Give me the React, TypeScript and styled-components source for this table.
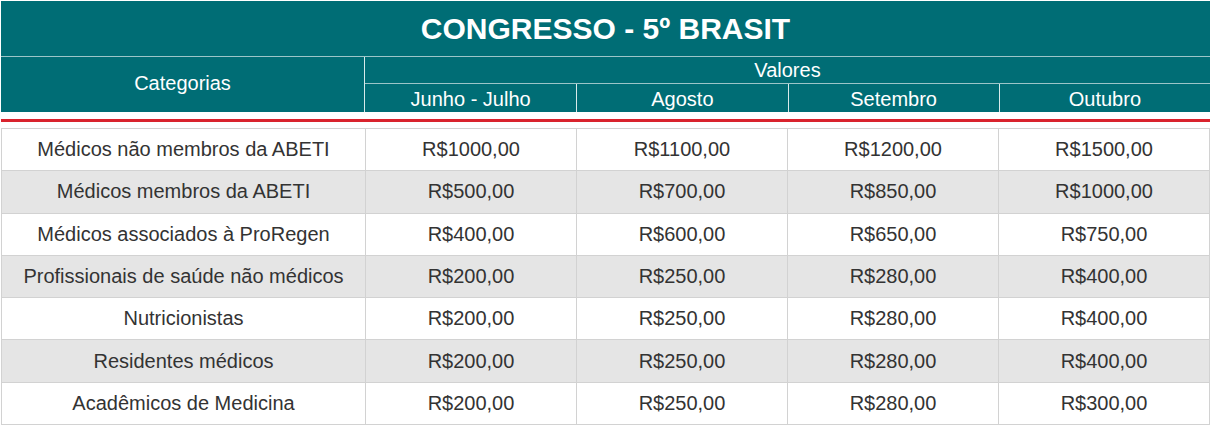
import React from 'react';
import styled, { createGlobalStyle } from 'styled-components';

const GlobalStyle = createGlobalStyle`
  body {
    margin: 0;
    background: #ffffff;
    font-family: 'Liberation Sans', Arial, sans-serif;
  }
`;

const months = ['Junho - Julho', 'Agosto', 'Setembro', 'Outubro'];

const rows: { label: string; prices: string[] }[] = [
  { label: 'Médicos não membros da ABETI', prices: ['R$1000,00', 'R$1100,00', 'R$1200,00', 'R$1500,00'] },
  { label: 'Médicos membros da ABETI', prices: ['R$500,00', 'R$700,00', 'R$850,00', 'R$1000,00'] },
  { label: 'Médicos associados à ProRegen', prices: ['R$400,00', 'R$600,00', 'R$650,00', 'R$750,00'] },
  { label: 'Profissionais de saúde não médicos', prices: ['R$200,00', 'R$250,00', 'R$280,00', 'R$400,00'] },
  { label: 'Nutricionistas', prices: ['R$200,00', 'R$250,00', 'R$280,00', 'R$400,00'] },
  { label: 'Residentes médicos', prices: ['R$200,00', 'R$250,00', 'R$280,00', 'R$400,00'] },
  { label: 'Acadêmicos de Medicina', prices: ['R$200,00', 'R$250,00', 'R$280,00', 'R$300,00'] },
];

const App: React.FC = () => {
  return (
    <>
      <GlobalStyle />
      <Wrapper>
        <Header>
          <Title>CONGRESSO - 5º BRASIT</Title>
          <HeadGrid>
            <CategoryCell>Categorias</CategoryCell>
            <ValuesCell>Valores</ValuesCell>
            {months.map((m, i) => (
              <MonthCell key={m} first={i === 0}>
                {m}
              </MonthCell>
            ))}
          </HeadGrid>
        </Header>
        <Divider />
        <PriceTable>
          <colgroup>
            <col style={{ width: 364 }} />
            <col />
            <col />
            <col />
            <col />
          </colgroup>
          <tbody>
            {rows.map((r, i) => (
              <Row key={r.label} shaded={i % 2 === 1}>
                <Cell>{r.label}</Cell>
                {r.prices.map((p, j) => (
                  <Cell key={j}>{p}</Cell>
                ))}
              </Row>
            ))}
          </tbody>
        </PriceTable>
      </Wrapper>
    </>
  );
};

const Wrapper = styled.div`
  width: 1209px;
  padding: 1px 1px 0 1px;
`;

const Header = styled.div`
  background: #006d75;
  color: #ffffff;
`;

const Title = styled.div`
  height: 55px;
  display: flex;
  align-items: center;
  justify-content: center;
  font-size: 30px;
  font-weight: bold;
  border-bottom: 1px solid #9cc5c8;
`;

const HeadGrid = styled.div`
  display: grid;
  grid-template-columns: 364px repeat(4, 1fr);
  grid-template-rows: 27px 28px;
  font-size: 20px;
`;

const CategoryCell = styled.div`
  grid-row: 1 / span 2;
  display: flex;
  align-items: center;
  justify-content: center;
  padding-bottom: 3px;
  border-right: 1px solid #d9eaeb;
`;

const ValuesCell = styled.div`
  grid-column: 2 / span 4;
  display: flex;
  align-items: center;
  justify-content: center;
  padding-top: 1px;
  border-bottom: 1px solid #9cc5c8;
`;

const MonthCell = styled.div<{ first: boolean }>`
  display: flex;
  align-items: center;
  justify-content: center;
  padding-top: 2px;
  border-left: ${({ first }) => (first ? 'none' : '1px solid #d9eaeb')};
`;

const Divider = styled.div`
  height: 3px;
  margin: 7px 0 6px;
  background: #d9232d;
`;

const PriceTable = styled.table`
  width: 100%;
  border-collapse: collapse;
  table-layout: fixed;
  border: 1px solid #d2d2d2;
`;

const Row = styled.tr<{ shaded: boolean }>`
  background: ${({ shaded }) => (shaded ? '#e5e5e5' : '#ffffff')};
`;

const Cell = styled.td`
  height: 41.3px;
  padding: 0;
  text-align: center;
  vertical-align: middle;
  font-size: 20px;
  color: #333333;
  border: 1px solid #d2d2d2;
`;

export default App;
